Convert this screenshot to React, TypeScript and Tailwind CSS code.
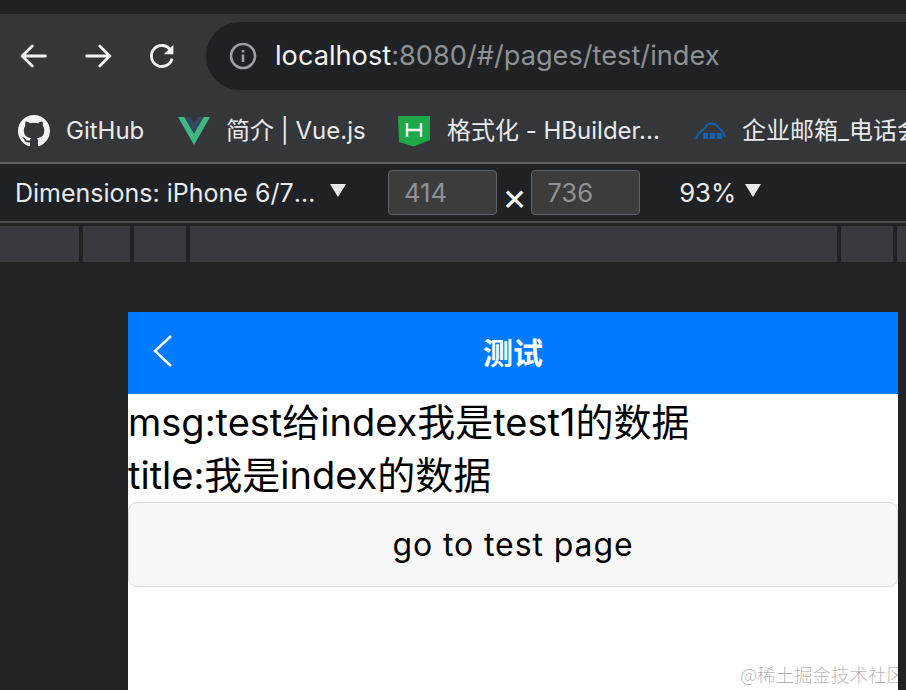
const sans = "font-['Inter','Noto_Sans_CJK_SC',sans-serif]";

function GithubMark() {
  return (
    <svg width="32" height="32" viewBox="0 0 16 16" fill="#f4f4f5">
      <path d="M8 0C3.58 0 0 3.58 0 8c0 3.54 2.29 6.53 5.47 7.59.4.07.55-.17.55-.38 0-.19-.01-.82-.01-1.49-2.01.37-2.53-.49-2.69-.94-.09-.23-.48-.94-.82-1.13-.28-.15-.68-.52-.01-.53.63-.01 1.08.58 1.23.82.72 1.21 1.87.87 2.33.66.07-.52.28-.87.51-1.07-1.78-.2-3.64-.89-3.64-3.95 0-.87.31-1.59.82-2.15-.08-.2-.36-1.02.08-2.12 0 0 .67-.21 2.2.82.64-.18 1.32-.27 2-.27s1.36.09 2 .27c1.53-1.04 2.2-.82 2.2-.82.44 1.1.16 1.92.08 2.12.51.56.82 1.27.82 2.15 0 3.07-1.87 3.75-3.65 3.95.29.25.54.73.54 1.48 0 1.07-.01 1.93-.01 2.2 0 .21.15.46.55.38A8.01 8.01 0 0 0 16 8c0-4.42-3.58-8-8-8z" />
    </svg>
  );
}

function VueMark() {
  return (
    <svg width="32" height="28" viewBox="0 0 32 28">
      <path d="M0 0h6.4L16 16.5 25.6 0H32L16 28z" fill="#41b883" />
      <path d="M6.4 0h6L16 6.4 19.6 0h6L16 16.5z" fill="#35495e" />
    </svg>
  );
}

function HBuilderMark() {
  return (
    <svg width="32" height="32" viewBox="0 0 32 32">
      <path d="M0 1h32v24l-16 6.5L1 27z" fill="#1fa84a" />
      <path d="M9 8v14M23 8v14M9 15h14" stroke="#f4f4f5" strokeWidth="2.4" fill="none" />
    </svg>
  );
}

function MailCloudMark() {
  return (
    <svg width="32" height="20" viewBox="0 0 32 20" fill="none">
      <path d="M2 18C4 12 8 9 11 7 13 2 20 0 25 7c3 2 5 6 6 9" stroke="#0f62ad" strokeWidth="2" />
      <rect x="9" y="12" width="5" height="6" fill="#0f62ad" />
      <rect x="16" y="12" width="5" height="6" fill="#0f62ad" />
      <rect x="23" y="12" width="5" height="6" fill="#0f62ad" />
    </svg>
  );
}

function Caret({ className }: { className: string }) {
  return <span className={`inline-block border-x-[8px] border-t-[13px] border-x-transparent border-t-[#e8eaed] ${className}`} />;
}

function Bookmark({ icon, label, className }: { icon: React.ReactNode; label: string; className: string }) {
  return (
    <div className={`flex shrink-0 items-center whitespace-nowrap ${className}`}>
      {icon}
      <span className="text-[24px] leading-none text-[#e8eaed]">{label}</span>
    </div>
  );
}

export default function App() {
  return (
    <div className={`relative h-[690px] w-[906px] overflow-hidden bg-[#212224] ${sans}`}>
      <div className="h-[14px] bg-[#202124]" />

      {/* browser toolbar */}
      <div className="h-[148px] overflow-hidden bg-[#35363a]">
        <div className="flex items-center pt-2">
          <div className="flex h-[68px] w-[206px] shrink-0 items-center gap-[36px] pl-[20px]">
            <svg width="28" height="28" viewBox="0 0 32 32" fill="none" stroke="#f1f3f4" strokeWidth="3.2" strokeLinecap="round" strokeLinejoin="round">
              <path d="M29 16H3M14 4.5 2.5 16 14 27.5" />
            </svg>
            <svg width="28" height="28" viewBox="0 0 32 32" fill="none" stroke="#f1f3f4" strokeWidth="3.2" strokeLinecap="round" strokeLinejoin="round">
              <path d="M3 16h26M18 4.5 29.5 16 18 27.5" />
            </svg>
            <svg width="28" height="28" viewBox="0 0 32 32">
              <path d="M26 9.5A12 12 0 1 0 27.5 19" fill="none" stroke="#f1f3f4" strokeWidth="3.2" />
              <path d="M29 3v11H18z" fill="#f1f3f4" />
            </svg>
          </div>
          <div className="flex h-[68px] flex-1 items-center rounded-l-[34px] bg-[#202124] pl-[23px]">
            <svg width="28" height="28" viewBox="0 0 28 28" fill="none" stroke="#9aa0a6">
              <circle cx="14" cy="14" r="12" strokeWidth="2.6" />
              <path d="M14 12.5V20M14 8v2.6" strokeWidth="2.6" />
            </svg>
            <span className="ml-[18px] whitespace-nowrap text-[27.2px] leading-none text-[#f1f3f4]">
              localhost<span className="text-[#8e9195]">:8080/#/pages/test/index</span>
            </span>
          </div>
        </div>
        <div className="flex h-[72px] items-center pt-[10px]">
          <Bookmark className="ml-[18px] w-[160px] gap-[16px]" icon={<GithubMark />} label="GitHub" />
          <Bookmark className="w-[220px] gap-[16px]" icon={<VueMark />} label="简介 | Vue.js" />
          <Bookmark className="w-[296px] gap-[17px]" icon={<HBuilderMark />} label="格式化 - HBuilder..." />
          <Bookmark className="gap-[16px]" icon={<MailCloudMark />} label="企业邮箱_电话会议" />
        </div>
      </div>
      <div className="h-[2px] bg-[#5f6165]" />

      {/* device toolbar */}
      <div className="flex h-[57px] items-center bg-[#202124] text-[25.7px] leading-none">
        <span className="ml-[15px] mt-[2px] w-[315px] whitespace-nowrap text-[25px] text-[#e8eaed]">
          Dimensions: iPhone 6/7<span className="tracking-[2px]">…</span>
        </span>
        <Caret className="-mt-[4px]" />
        <div className="ml-[42px] flex h-[45px] w-[109px] items-center rounded-[4px] border border-[#5f6368] bg-[#3c3c3c] pl-[15px] text-[#8f9195]">414</div>
        <span className="ml-[5px] mr-[4px] mt-[6px] text-[38px] text-[#f1f3f4]">×</span>
        <div className="flex h-[45px] w-[109px] items-center rounded-[4px] border border-[#5f6368] bg-[#3c3c3c] pl-[15px] text-[#8f9195]">736</div>
        <span className="ml-[39px] text-[#e8eaed]">93%</span>
        <Caret className="-mt-[4px] ml-[9px]" />
      </div>
      <div className="h-[2px] bg-[#494c50]" />

      {/* ruler */}
      <div className="mt-[3px] flex h-[36px] gap-[4px]">
        <div className="w-[79px] bg-[#373a3e]" />
        <div className="w-[47px] bg-[#373a3e]" />
        <div className="w-[52px] bg-[#373a3e]" />
        <div className="w-[647px] bg-[#373a3e]" />
        <div className="w-[52px] bg-[#373a3e]" />
        <div className="flex-1 bg-[#373a3e]" />
      </div>

      {/* emulated page */}
      <div className="ml-[128px] mt-[50px] h-[378px] w-[770px] bg-white font-['Inter','Noto_Sans_CJK_SC',sans-serif] text-black">
        <div className="flex h-[82px] items-center justify-center bg-[#007aff] relative">
          <svg className="absolute left-[24px] top-[22px]" width="22" height="34" viewBox="0 0 22 34" fill="none" stroke="#fff" strokeWidth="2.4">
            <path d="M19 2 3 17l16 15" />
          </svg>
          <span className="text-[30px] font-bold text-white">测试</span>
        </div>
        <div className="h-[55px] whitespace-nowrap text-[38px] leading-[57px]">msg:test给index我是test1的数据</div>
        <div className="h-[53px] whitespace-nowrap text-[38px] leading-[53px]">title:我是index的数据</div>
        <button className="h-[85px] w-full rounded-[9px] border border-[#dcdcdc] bg-[#f8f8f8] text-[32px] tracking-[0.9px]">go to test page</button>
      </div>

      {/* watermark */}
      <span className="absolute bottom-[1px] right-[1px] font-['Noto_Sans_CJK_SC',sans-serif] text-[18.5px] font-light leading-[30px] text-[#00000050]">@稀土掘金技术社区</span>
    </div>
  );
}
